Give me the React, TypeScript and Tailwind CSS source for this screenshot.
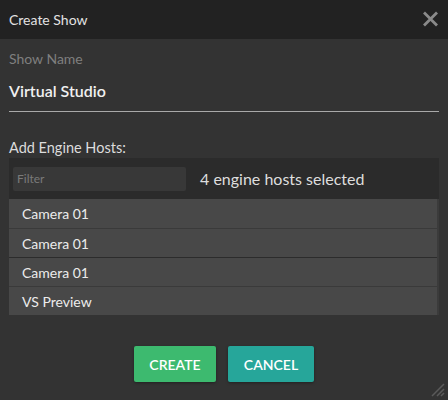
import React from "react";

const rows = ["Camera 01", "Camera 01", "Camera 01", "VS Preview"];

export default function App() {
  return (
    <div
      className="relative w-[448px] h-[400px] bg-[#333333] flex flex-col overflow-hidden"
      style={{ fontFamily: "Lato, 'Open Sans', sans-serif" }}
    >
      <div className="h-[39px] shrink-0 bg-[#222222] flex items-center justify-between pl-[9px] pr-[9px]">
        <span className="text-[14px] leading-[20px] text-[#e2e2e2]">Create Show</span>
        <svg width="17" height="16" viewBox="0 0 17 16" className="mt-[-2px]">
          <path d="M2 1.5 L15 14.5 M15 1.5 L2 14.5" stroke="#8a8a8a" strokeWidth="2.8" strokeLinecap="butt" />
        </svg>
      </div>
      <div className="flex flex-col px-[9px]">
        <div className="pt-[10px] text-[14px] leading-[20px] text-[#7f7f7f]">Show Name</div>
        <div className="mt-[10px] pb-[8px] border-b border-[#a9a9a9] text-[16px] leading-[24px] font-semibold text-[#f0f0f0]">
          Virtual Studio
        </div>
        <div className="mt-[26px] text-[14.5px] leading-[20px] text-[#dcdcdc]">Add Engine Hosts:</div>
        <div className="flex flex-col">
          <div className="h-[41px] bg-[#2b2b2b] flex items-center pl-[4px]">
            <div className="w-[173px] h-[24px] bg-[#383838] rounded-[2px] flex items-center pl-[4px] text-[12px] text-[#7a7a7a]">
              Filter
            </div>
            <span className="ml-[14px] text-[16px] text-[#dedede]">4 engine hosts selected</span>
          </div>
          <div className="flex">
            <div className="flex-1 flex flex-col">
              {rows.map((r, i) => (
                <div
                  key={i}
                  className={
                    "h-[29px] bg-[#484848] flex items-center pl-[13px] text-[14px] text-[#ececec] " +
                    (i === 0 ? "" : i === 2 ? "border-t border-[#2c2c2c]" : "border-t border-[#3a3a3a]")
                  }
                >
                  {r}
                </div>
              ))}
            </div>
            <div className="w-[2px] bg-[#3b3b3b]" />
          </div>
        </div>
        <div className="mt-[31px] flex justify-center gap-[12px]">
          <button className="w-[82px] h-[36px] rounded-[2px] bg-[#3dba6f] text-white text-[14px] font-semibold shadow-[0_1px_3px_rgba(0,0,0,0.35)]">
            CREATE
          </button>
          <button className="w-[86px] h-[36px] rounded-[2px] bg-[#26a69a] text-white text-[14px] font-semibold shadow-[0_1px_3px_rgba(0,0,0,0.35)]">
            CANCEL
          </button>
        </div>
      </div>
      <svg width="16" height="16" viewBox="0 0 16 16" className="absolute right-[3px] bottom-[3px]">
        <path d="M15 3 L3 15 M15 8 L8 15 M15 12 L12 15" stroke="#5a5a5a" strokeWidth="1.5" />
      </svg>
    </div>
  );
}
